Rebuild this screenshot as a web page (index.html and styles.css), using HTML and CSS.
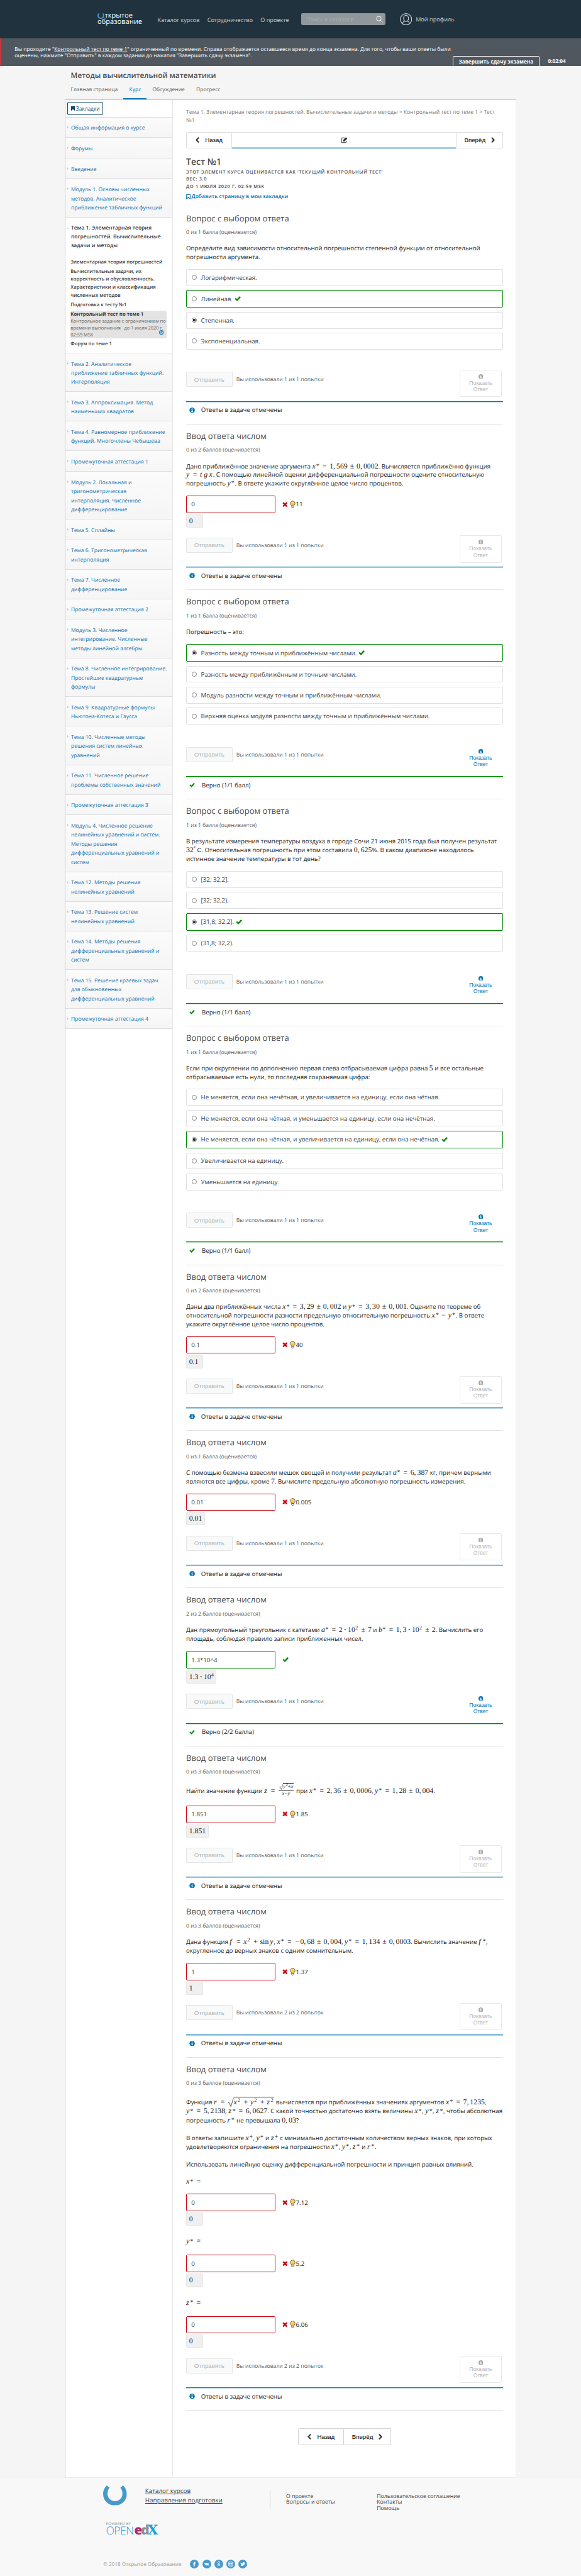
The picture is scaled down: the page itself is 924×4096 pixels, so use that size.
FILE: index.html
```
<!DOCTYPE html>
<html lang="ru">
<head>
<meta charset="utf-8">
<title>Тест №1 | Методы вычислительной математики</title>
<link rel="stylesheet" href="styles.css">
</head>
<body>
<svg class="sprite" aria-hidden="true">
  <symbol id="check" viewBox="0 0 17 16"><path d="M0.6 8.6 3.3 6l3.2 3.2L13.6 1.6 16.5 4.4 6.6 14.8Z"/></symbol>
  <symbol id="cross" viewBox="0 0 14 14"><path d="M3.5.6 7 4.1 10.5.6 13.4 3.5 9.9 7l3.5 3.5-2.9 2.9L7 9.9l-3.5 3.5L.6 10.5 4.1 7 .6 3.5Z"/></symbol>
  <symbol id="info" viewBox="0 0 14 14"><circle cx="7" cy="7" r="7"/><path fill="#fff" d="M5.8 2.2h2.4v2H5.8zM5 5.4h3.2v4.5H9v1.5H5V9.9h.9V6.9H5z"/></symbol>
  <symbol id="bulb" viewBox="0 0 15 20"><path fill="#fdd067" stroke="#3a3325" stroke-width="1.2" d="M7.5 1A6.2 6.2 0 0 0 3.900 12.200L4.500 14h6l.6-1.800A6.200 6.200 0 0 0 7.500 1Z"/><path fill="#ffb81c" d="M4 9.500h7L9.300 12.800H5.700z"/><path fill="#e8e8e8" stroke="#333" stroke-width="1.200" d="M4.800 14h5.400v3.500L8.800 19H6.200L4.800 17.500Z"/></symbol>
  <symbol id="prev" viewBox="0 0 10 15"><path d="M7.200 0 9.600 2.400 4.600 7.500 9.600 12.600 7.200 15 0 7.500Z"/></symbol>
  <symbol id="next" viewBox="0 0 10 15"><path d="M2.800 0 .4 2.400 5.400 7.500 .4 12.600 2.800 15 10 7.500Z"/></symbol>
  <symbol id="horseshoe" viewBox="0 0 62 52"><path fill="#4799cc" d="M10 0 17 6C11 12 11 21 12 26 14 35 21 41 31 41S48 35 50 26C51 21 51 12 45 6L52 0C58 5 62 13 62 22 62 40 48 52 31 52S0 40 0 22C0 13 4 5 10 0Z"/></symbol>
  <symbol id="root" viewBox="0 0 16 24" preserveAspectRatio="none"><path fill="none" stroke="#222" stroke-width="1.300" d="M.5 14.500 3.500 12.500 8.500 23 15.800.6"/></symbol>
</svg>

<header class="top">
  <a class="logo"><span><svg><use href="#horseshoe"/></svg>ткрытое</span><span>образование</span></a>
  <nav class="top-nav"><a>Каталог курсов</a><a>Сотрудничество</a><a>О проекте</a></nav>
  <div class="search"><span>Поиск в каталоге</span><svg viewBox="0 0 18 18"><circle cx="7.500" cy="7.500" r="6"/><path d="M12 12 17 17"/></svg></div>
  <a class="profile"><svg viewBox="0 0 32 32"><circle cx="16" cy="16" r="14.800"/><ellipse cx="16" cy="13.500" rx="6.500" ry="8"/><path d="M7 27c1-5 4-6 6-7M25 27c-1-5-4-6-6-7"/></svg>Мой профиль</a>
</header>

<section class="exam-bar">
  <p class="exam-text">Вы проходите "<a>Контрольный тест по теме 1</a>" ограниченный по времени. Справа отображается оставшееся время до конца экзамена. Для того, чтобы ваши ответы были<br>оценены, нажмите "Отправить" в каждом задании до нажатия "Завершить сдачу экзамена".</p>
  <div class="exam-actions"><button class="finish">Завершить сдачу экзамена</button><b>0:02:04</b></div>
</section>

<div class="course-head">
  <h1>Методы вычислительной математики</h1>
  <nav class="tabs"><a>Главная страница</a><a class="active">Курс</a><a>Обсуждение</a><a>Прогресс</a></nav>
</div>

<div class="course">
<aside class="side">
  <div class="side-top"><button class="bookmarks"><svg viewBox="0 0 10 12"><path d="M0 0h10v12L5 7.600 0 12Z"/></svg>Закладки</button></div>
  <a class="chapter">Общая информация о курсе</a>
  <a class="chapter">Форумы</a>
  <a class="chapter">Введение</a>
  <a class="chapter">Модуль 1. Основы численных<br>методов. Аналитическое<br>приближение табличных функций</a>
  <div class="open-chapter">
    <a class="chapter current">Тема 1. Элементарная теория<br>погрешностей. Вычислительные<br>задачи и методы</a>
    <ul class="lessons">
      <li>Элементарная теория погрешностей</li>
      <li>Вычислительные задачи, их<br>корректность и обусловленность.<br>Характеристики и классификация<br>численных методов</li>
      <li>Подготовка к тесту №1</li>
      <li class="selected"><b>Контрольный тест по теме 1</b><span>Контрольное задание с ограничением по<br>времени выполнения&nbsp;&nbsp; до 1 июля 2020 г.<br>02:59 MSK</span><svg viewBox="0 0 12 12"><circle cx="6" cy="6" r="4.900"/><path d="M6 3v3.300H3.800"/></svg></li>
      <li>Форум по теме 1</li>
    </ul>
  </div>
  <a class="chapter">Тема 2. Аналитическое<br>приближение табличных функций.<br>Интерполяция</a>
  <a class="chapter">Тема 3. Аппроксимация. Метод<br>наименьших квадратов</a>
  <a class="chapter">Тема 4. Равномерное приближение<br>функций. Многочлены Чебышева</a>
  <a class="chapter">Промежуточная аттестация 1</a>
  <a class="chapter">Модуль 2. Локальная и<br>тригонометрическая<br>интерполяция. Численное<br>дифференцирование</a>
  <a class="chapter">Тема 5. Сплайны</a>
  <a class="chapter">Тема 6. Тригонометрическая<br>интерполяция</a>
  <a class="chapter">Тема 7. Численное<br>дифференцирование</a>
  <a class="chapter">Промежуточная аттестация 2</a>
  <a class="chapter">Модуль 3. Численное<br>интегрирование. Численные<br>методы линейной алгебры</a>
  <a class="chapter">Тема 8. Численное интегрирование.<br>Простейшие квадратурные<br>формулы</a>
  <a class="chapter">Тема 9. Квадратурные формулы<br>Ньютона-Котеса и Гаусса</a>
  <a class="chapter">Тема 10. Численные методы<br>решения систем линейных<br>уравнений</a>
  <a class="chapter">Тема 11. Численное решение<br>проблемы собственных значений</a>
  <a class="chapter">Промежуточная аттестация 3</a>
  <a class="chapter">Модуль 4. Численное решение<br>нелинейных уравнений и систем.<br>Методы решения<br>дифференциальных уравнений и<br>систем</a>
  <a class="chapter">Тема 12. Методы решения<br>нелинейных уравнений</a>
  <a class="chapter">Тема 13. Решение систем<br>нелинейных уравнений</a>
  <a class="chapter">Тема 14. Методы решения<br>дифференциальных уравнений и<br>систем</a>
  <a class="chapter">Тема 15. Решение краевых задач<br>для обыкновенных<br>дифференциальных уравнений</a>
  <a class="chapter">Промежуточная аттестация 4</a>
</aside>

<main class="main">
  <p class="crumbs">Тема 1. Элементарная теория погрешностей. Вычислительные задачи и методы &gt; Контрольный тест по теме 1 &gt; Тест<br>№1</p>
  <div class="seq">
    <button><svg><use href="#prev"/></svg>Назад</button>
    <div class="seq-mid"><svg viewBox="0 0 18 16"><path fill="none" stroke="#333" stroke-width="1.800" d="M11 2H3.500A2 2 0 0 0 1.500 4v8.500a2 2 0 0 0 2 2H12a2 2 0 0 0 2-2V9.500"/><path fill="#333" d="M6 8 13.500.5 17 4 9.500 11.500H6Z"/></svg></div>
    <button class="fwd">Вперёд<svg><use href="#next"/></svg></button>
  </div>
  <div class="unit-head">
    <h2>Тест №1</h2>
    <p class="graded">Этот элемент курса оценивается как 'Текущий контрольный тест'<br>вес: 3.0</p>
    <p class="graded due">до 1 июля 2020 г. 02:59 MSK</p>
    <a class="add-mark"><svg viewBox="0 0 11 12"><path d="M1 .8h9v10.200L5.500 7.200 1 11Z"/></svg>Добавить страницу в мои закладки</a>
  </div>

  <section class="problem">
    <h3>Вопрос с выбором ответа</h3><p class="points">0 из 1 балла (оценивается)</p>
    <div class="text"><p>Определите вид зависимости относительной погрешности степенной функции от относительной<br>погрешности аргумента.</p></div>
    <div class="options">
      <label><i class="radio"></i>Логарифмическая.</label>
      <label class="right"><i class="radio"></i>Линейная.<svg><use href="#check"/></svg></label>
      <label><i class="radio on"></i>Степенная.</label>
      <label><i class="radio"></i>Экспоненциальная.</label>
    </div>
    <div class="action"><button class="submit">Отправить</button><span>Вы использовали 1 из 1 попытки</span><button class="show off"><svg><use href="#info"/></svg>Показать<br>Ответ</button></div>
    <div class="status"><svg><use href="#info"/></svg>Ответы в задаче отмечены</div>
  </section>

  <section class="problem">
    <h3>Ввод ответа числом</h3><p class="points">0 из 2 баллов (оценивается)</p>
    <div class="text"><p>Дано приближённое значение аргумента <span class="m"><i>x</i><s>*</s><b>=</b>1,<u></u>569<b class="bin">±</b>0,<u></u>0002</span>. Вычисляется приближённо функция<br><span class="m"><i>y</i><b>=</b><i>t</i><i>g</i><u></u><i>x</i></span>. С помощью линейной оценки дифференциальной погрешности оцените относительную<br>погрешность <span class="m"><i>y</i><s>*</s></span>. В ответе укажите округлённое целое число процентов.</p></div>
    <div class="answer"><input value="0"><svg class="x"><use href="#cross"/></svg><svg class="bulb"><use href="#bulb"/></svg><span>11</span></div>
    <div class="preview">0</div>
    <div class="action"><button class="submit">Отправить</button><span>Вы использовали 1 из 1 попытки</span><button class="show off"><svg><use href="#info"/></svg>Показать<br>Ответ</button></div>
    <div class="status"><svg><use href="#info"/></svg>Ответы в задаче отмечены</div>
  </section>

  <section class="problem">
    <h3>Вопрос с выбором ответа</h3><p class="points">1 из 1 балла (оценивается)</p>
    <div class="text"><p>Погрешность – это:</p></div>
    <div class="options">
      <label class="right"><i class="radio on"></i>Разность между точным и приближённым числами.<svg><use href="#check"/></svg></label>
      <label><i class="radio"></i>Разность между приближённым и точным числами.</label>
      <label><i class="radio"></i>Модуль разности между точным и приближённым числами.</label>
      <label><i class="radio"></i>Верхняя оценка модуля разности между точным и приближённым числами.</label>
    </div>
    <div class="action"><button class="submit">Отправить</button><span>Вы использовали 1 из 1 попытки</span><button class="show"><svg><use href="#info"/></svg>Показать<br>Ответ</button></div>
    <div class="status ok"><svg><use href="#check"/></svg>Верно (1/1 балл)</div>
  </section>

  <section class="problem">
    <h3>Вопрос с выбором ответа</h3><p class="points">1 из 1 балла (оценивается)</p>
    <div class="text"><p>В результате измерения температуры воздуха в городе Сочи 21 июня 2015 года был получен результат<br><span class="m">32<sup class="deg">°</sup></span><span class="arial">C</span>. Относительная погрешность при этом составила <span class="m">0,<u></u>625</span>%. В каком диапазоне находилось<br>истинное значение температуры в тот день?</p></div>
    <div class="options">
      <label><i class="radio"></i>[32; 32,2].</label>
      <label><i class="radio"></i>[32; 32,2).</label>
      <label class="right"><i class="radio on"></i>[31,8; 32,2].<svg><use href="#check"/></svg></label>
      <label><i class="radio"></i>(31,8; 32,2).</label>
    </div>
    <div class="action"><button class="submit">Отправить</button><span>Вы использовали 1 из 1 попытки</span><button class="show"><svg><use href="#info"/></svg>Показать<br>Ответ</button></div>
    <div class="status ok"><svg><use href="#check"/></svg>Верно (1/1 балл)</div>
  </section>

  <section class="problem">
    <h3>Вопрос с выбором ответа</h3><p class="points">1 из 1 балла (оценивается)</p>
    <div class="text"><p>Если при округлении по дополнению первая слева отбрасываемая цифра равна <span class="m">5</span> и все остальные<br>отбрасываемые есть нули, то последняя сохраняемая цифра:</p></div>
    <div class="options">
      <label><i class="radio"></i>Не меняется, если она нечётная, и увеличивается на единицу, если она чётная.</label>
      <label><i class="radio"></i>Не меняется, если она чётная, и уменьшается на единицу, если она нечётная.</label>
      <label class="right"><i class="radio on"></i>Не меняется, если она чётная, и увеличивается на единицу, если она нечётная.<svg><use href="#check"/></svg></label>
      <label><i class="radio"></i>Увеличивается на единицу.</label>
      <label><i class="radio"></i>Уменьшается на единицу.</label>
    </div>
    <div class="action"><button class="submit">Отправить</button><span>Вы использовали 1 из 1 попытки</span><button class="show"><svg><use href="#info"/></svg>Показать<br>Ответ</button></div>
    <div class="status ok"><svg><use href="#check"/></svg>Верно (1/1 балл)</div>
  </section>

  <section class="problem">
    <h3>Ввод ответа числом</h3><p class="points">0 из 2 баллов (оценивается)</p>
    <div class="text"><p>Даны два приближённых числа <span class="m"><i>x</i><s>*</s><b>=</b>3,<u></u>29<b class="bin">±</b>0,<u></u>002</span> и <span class="m"><i>y</i><s>*</s><b>=</b>3,<u></u>30<b class="bin">±</b>0,<u></u>001</span>. Оцените по теореме об<br>относительной погрешности разности предельную относительную погрешность <span class="m"><i>x</i><s>*</s><b class="bin">−</b><i>y</i><s>*</s></span>. В ответе<br>укажите округлённое целое число процентов.</p></div>
    <div class="answer"><input value="0.1"><svg class="x"><use href="#cross"/></svg><svg class="bulb"><use href="#bulb"/></svg><span>40</span></div>
    <div class="preview">0.1</div>
    <div class="action"><button class="submit">Отправить</button><span>Вы использовали 1 из 1 попытки</span><button class="show off"><svg><use href="#info"/></svg>Показать<br>Ответ</button></div>
    <div class="status"><svg><use href="#info"/></svg>Ответы в задаче отмечены</div>
  </section>

  <section class="problem">
    <h3>Ввод ответа числом</h3><p class="points">0 из 1 балла (оценивается)</p>
    <div class="text"><p>С помощью безмена взвесили мешок овощей и получили результат <span class="m"><i>a</i><s>*</s><b>=</b>6,<u></u>387</span> кг, причем верными<br>являются все цифры, кроме <span class="m">7</span>. Вычислите предельную абсолютную погрешность измерения.</p></div>
    <div class="answer"><input value="0.01"><svg class="x"><use href="#cross"/></svg><svg class="bulb"><use href="#bulb"/></svg><span>0.005</span></div>
    <div class="preview">0.01</div>
    <div class="action"><button class="submit">Отправить</button><span>Вы использовали 1 из 1 попытки</span><button class="show off"><svg><use href="#info"/></svg>Показать<br>Ответ</button></div>
    <div class="status"><svg><use href="#info"/></svg>Ответы в задаче отмечены</div>
  </section>

  <section class="problem">
    <h3>Ввод ответа числом</h3><p class="points">2 из 2 баллов (оценивается)</p>
    <div class="text tall"><p>Дан прямоугольный треугольник с катетами <span class="m"><i>a</i><s>*</s><b>=</b>2<b class="dot">·</b>10<sup>2</sup><b class="bin">±</b>7</span> и <span class="m"><i>b</i><s>*</s><b>=</b>1,<u></u>3<b class="dot">·</b>10<sup>2</sup><b class="bin">±</b>2</span>. Вычислить его<br>площадь, соблюдая правило записи приближенных чисел.</p></div>
    <div class="answer good"><input value="1.3*10^4"><svg class="tick"><use href="#check"/></svg></div>
    <div class="preview power">1.3<b class="dot">·</b>10<sup>4</sup></div>
    <div class="action"><button class="submit">Отправить</button><span>Вы использовали 1 из 1 попытки</span><button class="show"><svg><use href="#info"/></svg>Показать<br>Ответ</button></div>
    <div class="status ok"><svg><use href="#check"/></svg>Верно (2/2 балла)</div>
  </section>

  <section class="problem">
    <h3>Ввод ответа числом</h3><p class="points">0 из 3 баллов (оценивается)</p>
    <div class="text with-frac"><p>Найти значение функции <span class="m"><i>z</i><b>=</b><span class="frac"><span class="num"><svg class="root"><use href="#root"/></svg><span class="rad"><i>y</i><sup>2</sup>+<i>x</i></span></span><span class="den"><i>x</i>−<i>y</i></span></span></span> при <span class="m"><i>x</i><s>*</s><b>=</b>2,<u></u>36<b class="bin">±</b>0,<u></u>0006</span>, <span class="m"><i>y</i><s>*</s><b>=</b>1,<u></u>28<b class="bin">±</b>0,<u></u>004</span>.</p></div>
    <div class="answer"><input value="1.851"><svg class="x"><use href="#cross"/></svg><svg class="bulb"><use href="#bulb"/></svg><span>1.85</span></div>
    <div class="preview">1.851</div>
    <div class="action"><button class="submit">Отправить</button><span>Вы использовали 1 из 1 попытки</span><button class="show off"><svg><use href="#info"/></svg>Показать<br>Ответ</button></div>
    <div class="status"><svg><use href="#info"/></svg>Ответы в задаче отмечены</div>
  </section>

  <section class="problem">
    <h3>Ввод ответа числом</h3><p class="points">0 из 3 баллов (оценивается)</p>
    <div class="text tall"><p>Дана функция <span class="m"><i>f</i><b>=</b><i>x</i><sup>2</sup><b class="bin">+</b>sin<u></u><i>y</i></span>, <span class="m"><i>x</i><s>*</s><b>=</b><em>−</em>0,<u></u>68<b class="bin">±</b>0,<u></u>004</span>, <span class="m"><i>y</i><s>*</s><b>=</b>1,<u></u>134<b class="bin">±</b>0,<u></u>0003</span>. Вычислить значение <span class="m"><i>f</i><s>*</s></span>,<br>округленное до верных знаков с одним сомнительным.</p></div>
    <div class="answer"><input value="1"><svg class="x"><use href="#cross"/></svg><svg class="bulb"><use href="#bulb"/></svg><span>1.37</span></div>
    <div class="preview">1</div>
    <div class="action"><button class="submit">Отправить</button><span>Вы использовали 2 из 2 попыток</span><button class="show off"><svg><use href="#info"/></svg>Показать<br>Ответ</button></div>
    <div class="status"><svg><use href="#info"/></svg>Ответы в задаче отмечены</div>
  </section>

  <section class="problem">
    <h3>Ввод ответа числом</h3><p class="points">0 из 3 баллов (оценивается)</p>
    <div class="text tall long">
      <p>Функция <span class="m"><i>r</i><b>=</b><svg class="root"><use href="#root"/></svg><span class="rad"><i>x</i><sup>2</sup><b class="bin">+</b><i>y</i><sup>2</sup><b class="bin">+</b><i>z</i><sup>2</sup></span></span> вычисляется при приближённых значениях аргументов <span class="m"><i>x</i><s>*</s><b>=</b>7,<u></u>1235</span>,<br><span class="m"><i>y</i><s>*</s><b>=</b>5,<u></u>2138</span>, <span class="m"><i>z</i><s>*</s><b>=</b>6,<u></u>0627</span>. С какой точностью достаточно взять величины <span class="m"><i>x</i><s>*</s></span>, <span class="m"><i>y</i><s>*</s></span>, <span class="m"><i>z</i><s>*</s></span>, чтобы абсолютная<br>погрешность <span class="m"><i>r</i><s>*</s></span> не превышала <span class="m">0,<u></u>03</span>?</p>
      <p>В ответы запишите <span class="m"><i>x</i><s>*</s></span>, <span class="m"><i>y</i><s>*</s></span> и <span class="m"><i>z</i><s>*</s></span> с минимально достаточным количеством верных знаков, при которых<br>удовлетворяются ограничения на погрешности <span class="m"><i>x</i><s>*</s></span>, <span class="m"><i>y</i><s>*</s></span>, <span class="m"><i>z</i><s>*</s></span> и <span class="m"><i>r</i><s>*</s></span>.</p>
      <p>Использовать линейную оценку дифференциальной погрешности и принцип равных влияний.</p>
      <p><span class="m"><i>x</i><s>*</s><b>=</b></span></p>
    </div>
    <div class="answer"><input value="0"><svg class="x"><use href="#cross"/></svg><svg class="bulb"><use href="#bulb"/></svg><span>7.12</span></div>
    <div class="preview">0</div>
    <p class="var"><span class="m"><i>y</i><s>*</s><b>=</b></span></p>
    <div class="answer"><input value="0"><svg class="x"><use href="#cross"/></svg><svg class="bulb"><use href="#bulb"/></svg><span>5.2</span></div>
    <div class="preview">0</div>
    <p class="var"><span class="m"><i>z</i><s>*</s><b>=</b></span></p>
    <div class="answer"><input value="0"><svg class="x"><use href="#cross"/></svg><svg class="bulb"><use href="#bulb"/></svg><span>6.06</span></div>
    <div class="preview">0</div>
    <div class="action"><button class="submit">Отправить</button><span>Вы использовали 2 из 2 попыток</span><button class="show off"><svg><use href="#info"/></svg>Показать<br>Ответ</button></div>
    <div class="status"><svg><use href="#info"/></svg>Ответы в задаче отмечены</div>
  </section>

  <div class="pager"><button><svg><use href="#prev"/></svg>Назад</button><button class="fwd">Вперёд<svg><use href="#next"/></svg></button></div>
</main>
</div>

<footer class="foot">
  <div class="foot-row">
    <svg class="foot-logo"><use href="#horseshoe"/></svg>
    <div class="foot-main"><a>Каталог курсов</a><a>Направления подготовки</a></div>
    <div class="foot-rule"></div>
    <div class="foot-col first"><a>О проекте</a><a>Вопросы и ответы</a></div>
    <div class="foot-col"><a>Пользовательское соглашение</a><a>Контакты</a><a>Помощь</a></div>
  </div>
  <div class="openedx"><small>POWERED BY</small><div><span class="open">OPEN</span><span class="e">e</span><span class="d">d</span><span class="xx">X</span></div></div>
  <div class="foot-bottom">
    <span>© 2018 Открытое Образование</span>
    <div class="social">
      <svg viewBox="0 0 24 24"><circle cx="12" cy="12" r="12"/><path fill="#fff" d="M10.500 19v-6H9v-2.500h1.500V9c0-2 1-3.300 3-3.300h1.500v2.500h-1c-.8 0-1 .4-1 1v1.300h2L14.700 13H13v6z"/></svg>
      <svg viewBox="0 0 24 24"><circle cx="12" cy="12" r="12"/><path fill="#fff" d="M5 8.500h2.500l2 4V8.500h3v3L15 8.500h3L15.700 12l3 3.800h-3.200l-2.500-2.500v2.500h-1.500C8.500 15.800 6.500 13 5 8.500Z"/></svg>
      <svg viewBox="0 0 24 24"><circle cx="12" cy="12" r="12"/><circle class="ln" cx="12" cy="8" r="2.600"/><path class="ln" d="M8 12.500c2.500 1.800 5.500 1.800 8 0M12 14l-3.500 4M12 14l3.500 4"/></svg>
      <svg viewBox="0 0 24 24"><circle cx="12" cy="12" r="12"/><rect class="ln" x="6.500" y="6.500" width="11" height="11" rx="1.500"/><circle class="ln" cx="12" cy="12.500" r="2.600"/><path class="ln" d="M6.500 9.500h4M13.500 9.500h4"/></svg>
      <svg viewBox="0 0 24 24"><circle cx="12" cy="12" r="12"/><path fill="#fff" d="M18.500 8l-1.400.5c.5-.3.9-.9 1-1.500l-1.600.7a2.600 2.600 0 0 0-4.500 2.300C9.800 10 8 8.900 6.600 7.300c-.7 1.300-.3 2.700.8 3.500l-1.100-.3c0 1.200.8 2.300 2 2.600l-1.100.1c.3 1 1.300 1.700 2.400 1.800A5.500 5.500 0 0 1 5.500 16c5.500 3.300 12-.2 11.700-6.600z"/></svg>
    </div>
  </div>
</footer>
</body>
</html>
```
FILE: styles.css
```
* { box-sizing: border-box; margin: 0; padding: 0; }
html { font-size: 6.083px; }
body {
  background: #f5f5f5;
  color: #222;
  font-family: "Open Sans", "Noto Sans", sans-serif;
  font-size: 1.6rem;
  text-rendering: geometricPrecision;
  height: 673.4rem;
  overflow: hidden;
}
.sprite { position: absolute; width: 0; height: 0; }
svg { display: block; flex: none; }
a { text-decoration: none; color: inherit; }
button { font: inherit; background: none; border: 0; white-space: nowrap; }

/* site header */
.top { height: 10rem; background: #20323d; color: #ccd1d4; display: flex; align-items: center; padding-left: 25.5rem; }
.logo { width: 15.7rem; color: #fff; font-size: 1.82rem; line-height: 1.75rem; }
.logo span { display: flex; align-items: center; }
.logo svg { width: 1.8rem; height: 1.5rem; margin-right: .1rem; }
.top-nav { width: 37.6rem; display: flex; gap: 2rem; font-size: 1.5rem; white-space: nowrap; padding-top: .3rem; }
.search { width: 21.9rem; height: 3rem; background: #90989d; border-radius: .4rem; padding: 0 .6rem 0 1.2rem; display: flex; align-items: center; justify-content: space-between; color: #a6adb1; font-size: 1.5rem; }
.search svg { width: 1.8rem; height: 1.8rem; fill: none; stroke: #fff; stroke-width: 1.6; }
.profile { margin-left: 3.8rem; display: flex; align-items: center; gap: 1rem; font-size: 1.5rem; white-space: nowrap; }
.profile svg { width: 3.2rem; height: 3.2rem; fill: none; stroke: #ccd1d4; stroke-width: 2; }

/* timed exam notice */
.exam-bar { height: 7.2rem; background: #50575e; color: #fff; border-left: 2px solid #c8373e; padding-left: 3.5rem; display: flex; justify-content: space-between; font-size: 1.375rem; }
.exam-text { line-height: 1.63rem; padding-top: 2.1rem; white-space: nowrap; }
.exam-text a { text-decoration: underline; }
.exam-actions { align-self: flex-end; display: flex; align-items: center; gap: 2.3rem; padding-right: 4rem; margin-bottom: -.4rem; font-size: 1.35rem; margin-left: -6rem; }
.finish { width: 22.6rem; height: 3rem; border: 1px solid #fff; border-radius: .3rem; color: #fff; font-weight: 700; }

.course-head { height: 8.8rem; padding: 1.4rem 0 0 18.5rem; display: flex; flex-direction: column; justify-content: space-between; }
.course-head h1 { font-size: 1.94rem; line-height: 2.6rem; font-weight: 600; color: #4a4a4a; }
.tabs { display: flex; margin-left: -1.5rem; font-size: 1.4rem; color: #5e5e5e; }
.tabs a { height: 3.9rem; line-height: 2.8rem; padding: 0 1.5rem; }
.tabs .active { color: #0075b4; border-bottom: 2px solid #0075b4; }

/* course layout */
.course { margin-left: 17rem; width: 118rem; height: 621.7rem; display: flex; background: #fff; border: 1px solid #c8c8c8; border-right-color: #eee; border-bottom-color: #eaeaea; }
.side { width: 28rem; flex: none; border-right: 1px solid #e7e7e7; font-size: 1.4rem; }
.side-top { height: 4.5rem; padding: .5rem; border-bottom: 1px solid #ddd; }
.bookmarks { width: 9.3rem; height: 3.5rem; border: 1px solid #175477; border-radius: .3rem; color: #175477; font-size: 1.38rem; display: flex; align-items: center; justify-content: center; gap: .3rem; }
.bookmarks svg { width: 1rem; height: 1.2rem; fill: #0c4567; }
.chapter { display: block; position: relative; padding: 1.6rem 0 1.4rem 1.4rem; line-height: 2.369rem; font-size: 1.41rem; white-space: nowrap; color: #1272af; background: linear-gradient(#fbfbfb, #f5f5f5); box-shadow: inset 0 -1px #dedede; }
.chapter::before { content: ""; position: absolute; left: .4rem; top: 2.3rem; border-left: .45rem solid #c4c4c4; border-top: .4rem solid transparent; border-bottom: .4rem solid transparent; }
.open-chapter { height: 35.5rem; border-bottom: 1px solid #e4e4e4; }
.chapter.current { background: none; box-shadow: none; color: #3a3a3a; font-weight: 600; font-size: 1.4rem; padding-bottom: 0; }
.chapter.current::before { border-left: .4rem solid transparent; border-right: .4rem solid transparent; border-top: .45rem solid #c4c4c4; border-bottom: 0; top: 2.6rem; left: .3rem; }
.lessons { list-style: none; padding: 1.95rem 0 0 1.3rem; font-weight: 600; font-size: 1.28rem; line-height: 2.08rem; color: #3a3a3a; white-space: nowrap; }
.lessons li { margin-bottom: .38rem; }
.lessons .selected { position: relative; width: 25.1rem; height: 7.35rem; background: #e3e3e3; border-radius: .4rem; margin-bottom: .4rem; }
.selected b { display: block; font-weight: 700; line-height: 2rem; }
.selected span { display: block; font-weight: 400; font-size: 1.22rem; line-height: 1.8rem; color: #5e5e5e; }
.selected svg { position: absolute; right: .7rem; bottom: 1rem; width: 1.2rem; height: 1.2rem; fill: none; stroke: #1272af; stroke-width: 2; }

.main { flex: none; width: 89.9rem; padding: 2.1rem 3.5rem 0 3.5rem; }
.crumbs { font-size: 1.405rem; line-height: 2.1rem; height: 6.2rem; color: #767676; white-space: nowrap; }
.seq { display: flex; height: 4.3rem; font-family: "Liberation Sans", sans-serif; color: #333; }
.seq button, .pager button { width: 12rem; border: 1px solid #ddd; border-radius: .3rem 0 0 .3rem; display: flex; align-items: center; justify-content: center; gap: 1.5rem; }
.seq .fwd, .pager .fwd { width: 12.3rem; border-radius: 0 .3rem .3rem 0; }
.seq button svg, .pager svg { width: 1rem; height: 1.5rem; fill: #333; }
.seq-mid { flex: 1; display: flex; align-items: center; justify-content: center; border-top: 1px solid #ddd; border-bottom: 1px solid #0075b4; box-shadow: inset 0 -1px rgba(0, 117, 180, .35); }
.seq-mid svg { width: 1.8rem; height: 1.6rem; }
.unit-head { height: 15.25rem; padding-top: 1.85rem; white-space: nowrap; color: #4a4a4a; }
.unit-head h2 { font-size: 2.3rem; line-height: 3.6rem; font-weight: 600; }
.graded { text-transform: uppercase; font-size: 1.2rem; line-height: 1.8rem; letter-spacing: .11rem; font-weight: 600; color: #4a4a4a; }
.graded.due { line-height: 2.2rem; }
.add-mark { display: flex; align-items: center; gap: .2rem; font-size: 1.4rem; line-height: 2.8rem; font-weight: 600; color: #0075b4; }
.add-mark svg { width: 1.2rem; height: 1.3rem; fill: none; stroke: #0075b4; stroke-width: 1.6; }

/* problems */
.problem h3 { font-size: 2.15rem; line-height: 3rem; padding-top: 1.5rem; font-weight: 400; color: #4a4a4a; }
.points { font-size: 1.42rem; line-height: 2rem; padding: 1.2rem 0 0; height: 5.35rem; color: #5e5e5e; }
.text { line-height: 2.25rem; margin-bottom: 2rem; white-space: nowrap; }
.text.tall { line-height: 2.36rem; margin-bottom: 1.9rem; }
.text p + p { margin-top: 2.2rem; }
.text.long { padding-top: .4rem; }
.text.with-frac { line-height: 3.6rem; }
.options { display: flex; flex-direction: column; gap: 1.08rem; margin-bottom: 5.84rem; }
.options label { height: 4.4rem; border: 1px solid #e0e0e0; border-radius: .3rem; display: flex; align-items: center; padding-left: 1.3rem; color: #3d3d3d; white-space: nowrap; }
.options .right { height: 4.6rem; border-color: #008a00; }
.options svg { width: 1.7rem; height: 1.6rem; fill: #008a00; margin-left: .5rem; }
.radio { flex: none; width: 1.32rem; height: 1.32rem; border: 1px solid #8a8a8a; border-radius: 50%; margin-right: 1.1rem; background: #fff; }
.radio.on { background: radial-gradient(#333 0 48%, #fff 56%); }
.answer { display: flex; align-items: center; height: 4.57rem; color: #222; }
.answer input { width: 23.3rem; height: 100%; border: 1px solid #cb0712; border-radius: .3rem; padding: 0 0 0 1.2rem; font: inherit; color: #3c3c3c; margin-right: 1.9rem; background: #fff; }
.answer.good input { border-color: #008a00; }
.answer .x { width: 1.4rem; height: 1.4rem; fill: #cb0712; margin-right: .6rem; }
.answer .bulb { width: 1.5rem; height: 2rem; }
.answer .tick { width: 1.7rem; height: 1.6rem; fill: #008a00; }
.preview { width: fit-content; min-width: 4.4rem; height: 3.45rem; margin: .35rem 0 2.65rem; padding: 0 .6rem; background: #f0f0f0; border: 1px solid #e6e6e6; border-radius: .3rem; font: 1.94rem/3rem "Liberation Serif", serif; }
.preview.power { height: 3.65rem; line-height: 3.6rem; padding-right: .3rem; }
.var { margin-top: 3rem; height: 4.6rem; line-height: 2.36rem; }
.action { display: flex; height: 7.62rem; }
.submit { width: 12.1rem; height: 3.95rem; background: #f8f9f9; border: 1px solid #e4e6e6; border-radius: .2rem; color: #b0b3b3; font-family: "Liberation Sans", sans-serif; }
.action span { font-size: 1.42rem; line-height: 4.1rem; color: #5e5e5e; margin-left: 1rem; white-space: nowrap; }
.show { margin: -.6rem .4rem 0 auto; width: 11rem; height: 7.15rem; border: 1px solid transparent; border-radius: .3rem; color: #0075b4; font: 1.4rem/1.7rem "Liberation Sans", sans-serif; }
.show svg { width: 1.25rem; height: 1.25rem; margin: 0 auto .25rem; fill: #0075b4; }
.show.off { border-color: #e8e8e8; color: #b4b4b4; }
.show.off svg { fill: #a8a8a8; }
.status { height: 6.1rem; border-top: 1px solid #0075b4; border-bottom: 1px solid #e4e4e4; box-shadow: inset 0 1px rgba(0, 117, 180, .35); padding: 1.1rem 0 0 .9rem; display: flex; gap: 1.5rem; line-height: 2.2rem; }
.status svg { width: 1.5rem; height: 1.4rem; margin-top: .35rem; fill: #0075b4; }
.status.ok { border-top-color: #008a00; box-shadow: inset 0 1px rgba(0, 138, 0, .35); gap: 1.7rem; }
.status.ok svg { fill: #008a00; }

/* formulas */
.m { font-family: "Liberation Serif", serif; font-size: 1.94rem; line-height: 0; display: inline-block; white-space: nowrap; }
.m i { display: inline-block; min-width: .53em; }
.m sup, .preview sup { display: inline-block; min-width: .68em; font-size: 1.37rem; line-height: 0; vertical-align: .45em; }
.m s { display: inline-block; width: .55em; font-size: 1.7rem; line-height: 0; text-decoration: none; vertical-align: .08em; }
.m u { display: inline-block; width: .17em; }
.m b { display: inline-block; width: 1.33em; text-align: center; font-weight: 400; }
.m em { display: inline-block; width: .78em; text-align: center; font-style: normal; }
.m b.bin { width: 1.22em; }
.m b.dot, .preview b { display: inline-block; width: .72em; text-align: center; font-weight: 700; }
.arial { font-family: "Liberation Sans", sans-serif; }
.root { display: inline-block; width: 1.6rem; height: 2.5rem; vertical-align: -.7rem; }
.rad { display: inline-block; border-top: 1px solid #222; height: 2.4rem; line-height: 2.3rem; }
.rad b { line-height: 0; }
.frac { display: inline-flex; flex-direction: column; align-items: center; vertical-align: middle; font-size: 1.37rem; margin: 0 .2rem; margin-top: -.6rem; }
.frac .num { display: flex; border-bottom: 1px solid #222; height: 2rem; padding: 0 .1rem; }
.frac .root { width: 1.1rem; height: 1.8rem; }
.frac .rad { height: 1.7rem; line-height: 1.8rem; }
.frac sup { font-size: .97rem; min-width: 0; vertical-align: .4em; }
.frac .den { line-height: 1.8rem; }

.pager { display: flex; justify-content: center; height: 4.5rem; margin-top: 4.6rem; font-family: "Liberation Sans", sans-serif; color: #333; }
.pager button { border-color: #d4d4d4; }
.pager .fwd { border-left: 0; }

/* footer */
.foot { background: #f8f8f8; height: 25.7rem; padding: 2rem 0 0 27rem; color: #3a3a3a; }
.foot-row { display: flex; height: 9.3rem; white-space: nowrap; }
.foot-logo { width: 6.2rem; height: 5.2rem; margin-right: 4.75rem; }
.foot-main { width: 32.5rem; margin-top: .1rem; line-height: 2.45rem; font-size: 1.62rem; display: flex; flex-direction: column; align-items: flex-start; }
.foot-main a { text-decoration: underline; }
.foot-rule { width: 1px; height: 4.2rem; margin-top: 1.5rem; background: #ccc; }
.foot-col { line-height: 1.58rem; font-size: 1.43rem; margin-top: 2.1rem; display: flex; flex-direction: column; }
.foot-col.first { margin-left: 4.2rem; width: 23.7rem; }
.openedx { height: 10.1rem; padding: .3rem 0 0 .7rem; line-height: 1; }
.openedx small { display: block; font-size: 1rem; color: #8a8a8a; letter-spacing: .03rem; line-height: 1rem; height: .7rem; }
.openedx div { display: flex; align-items: baseline; line-height: 2.9rem; }
.open { color: #1e9fda; font-size: 2.9rem; font-weight: 300; letter-spacing: -.1rem; }
.e, .d { font-weight: 800; font-size: 3.4rem; letter-spacing: -.35rem; }
.e { color: #b72667; margin-left: .2rem; }
.d { color: #8c8f91; }
.xx { font: 700 3.5rem/2.9rem "DejaVu Serif", serif; color: #1e9fda; margin-left: -.1rem; }
.foot-bottom { display: flex; align-items: center; height: 2.4rem; gap: 2.3rem; font-size: 1.34rem; color: #999; }
.foot-bottom span { white-space: nowrap; }
.social { display: flex; gap: .85rem; }
.social svg { width: 2.3rem; height: 2.3rem; fill: #4799cc; }
.social .ln { fill: none; stroke: #fff; stroke-width: 1.7; }
```
